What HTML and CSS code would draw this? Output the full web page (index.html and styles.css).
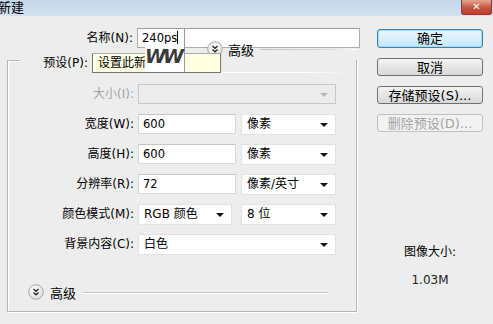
FILE: index.html
```html
<!DOCTYPE html>
<html lang="zh-CN">
<head>
    <meta charset="UTF-8">
    <title>新建</title>
    <link rel="stylesheet" href="styles.css">
</head>
<body>
<div class="dialog">
    <div class="titlebar">
        <span class="title">新建</span>
        <span class="close">✕</span>
    </div>

    <div class="main">
        <div class="left">
            <div class="name-row">
                <label>名称(N):</label>
                <div class="field name-field">240ps<span class="caret"></span></div>
            </div>

            <div class="group">
                <div class="preset-row">
                    <label>预设(P):</label>
                    <div class="preset-fade"></div>
                </div>

                <div class="row">
                    <label class="off">大小(I):</label>
                    <div class="select wide disabled"><span></span><i class="arrow"></i></div>
                </div>
                <div class="row">
                    <label>宽度(W):</label>
                    <div class="field">600</div>
                    <div class="select"><span>像素</span><i class="arrow"></i></div>
                </div>
                <div class="row">
                    <label>高度(H):</label>
                    <div class="field">600</div>
                    <div class="select"><span>像素</span><i class="arrow"></i></div>
                </div>
                <div class="row">
                    <label>分辨率(R):</label>
                    <div class="field">72</div>
                    <div class="select"><span>像素/英寸</span><i class="arrow"></i></div>
                </div>
                <div class="row">
                    <label>颜色模式(M):</label>
                    <div class="select short"><span>RGB 颜色</span><i class="arrow"></i></div>
                    <div class="select"><span>8 位</span><i class="arrow"></i></div>
                </div>
                <div class="row">
                    <label>背景内容(C):</label>
                    <div class="select wide"><span>白色</span><i class="arrow"></i></div>
                </div>

                <div class="advanced">
                    <svg class="toggle" width="16" height="16" viewBox="0 0 16 16">
                        <defs>
                            <radialGradient id="g1" cx="0.4" cy="0.35" r="0.7">
                                <stop offset="0" stop-color="#ffffff"/>
                                <stop offset="1" stop-color="#dcdcdc"/>
                            </radialGradient>
                        </defs>
                        <circle cx="8" cy="8" r="7.3" fill="url(#g1)" stroke="#a8a8a8"/>
                        <polyline points="5.5,5 8,7.3 10.5,5" fill="none" stroke="#222" stroke-width="1.3"/>
                        <polyline points="5.5,8.5 8,10.8 10.5,8.5" fill="none" stroke="#222" stroke-width="1.3"/>
                    </svg>
                    <span>高级</span>
                    <div class="rule"></div>
                </div>
            </div>
        </div>

        <div class="right">
            <button class="btn default">确定</button>
            <button class="btn">取消</button>
            <button class="btn">存储预设(S)...</button>
            <button class="btn" disabled>删除预设(D)...</button>

            <div class="size-info">
                <div>图像大小:</div>
                <div class="size-value">1.03M</div>
            </div>
        </div>
    </div>

    <!-- overlapping bits: top toggle, tooltip, watermark -->
    <div class="top-adv">
        <svg class="toggle" width="16" height="16" viewBox="0 0 16 16">
            <circle cx="8" cy="8" r="7.3" fill="url(#g1)" stroke="#a8a8a8"/>
            <polyline points="5.5,5 8,7.3 10.5,5" fill="none" stroke="#222" stroke-width="1.3"/>
            <polyline points="5.5,8.5 8,10.8 10.5,8.5" fill="none" stroke="#222" stroke-width="1.3"/>
        </svg>
        <span>高级</span>
        <div class="rule"></div>
    </div>
    <div class="tooltip">设置此新文档的</div>
    <div class="watermark">WW</div>
</div>
</body>
</html>
```

FILE: styles.css
```css
/* 新建 dialog */
body {
    margin: 0;
    font-family: 'DejaVu Sans', 'Noto Sans CJK SC', sans-serif;
    font-size: 12px;
    color: #000;
    background: #ededed;
}
.dialog {
    position: relative;
    width: 493px;
    height: 324px;
    overflow: hidden;
    background: #ededed;
}
.titlebar {
    height: 16px;
    border-bottom: 1px solid #e6eef6;
    background: linear-gradient(to bottom, #c4d8ec, #d3e2f1);
    display: flex;
    justify-content: space-between;
    align-items: flex-start;
}
.title {
    line-height: 15px;
    margin-left: -2px;
    font-size: 13px;
}
.close {
    width: 29px;
    height: 14px;
    margin-right: 1px;
    background: linear-gradient(to bottom, #e8a393, #c9533f 55%, #b8402d);
    border: 1px solid #8c3a2e;
    border-top: none;
    border-radius: 0 0 3px 3px;
    color: #fff;
    font-size: 10px;
    font-weight: bold;
    text-align: center;
    line-height: 13px;
}
.main {
    display: flex;
    padding-top: 11px;
}
.left {
    width: 370px;
}
.name-row {
    display: grid;
    grid-template-columns: 133px 223px;
    column-gap: 4px;
    height: 19px;
}
label {
    text-align: right;
    line-height: 20px;
    white-space: nowrap;
}
label.off {
    color: #a3a3a3;
}
.field {
    background: #fff;
    border: 1px solid #d9d9d9;
    border-top-color: #c4c4c4;
    padding-left: 4px;
    line-height: 18px;
    height: 18px;
    font-size: 11.5px;
}
.name-field {
    border-color: #abadb3;
    border-top-color: #9a9da4;
}
.caret {
    display: inline-block;
    width: 1px;
    height: 13px;
    background: #000;
    vertical-align: -2px;
}
.group {
    margin: 13px 0 0 7px;
    width: 348px;
    height: 250px;
    border: 1px solid #b5b5b5;
    box-shadow: inset 1px 1px 0 #fff, 1px 1px 0 #fff;
    display: flex;
    flex-direction: column;
    gap: 10px;
}
.preset-row {
    display: grid;
    grid-template-columns: 68px 262px;
    column-gap: 4px;
    height: 20px;
    margin: -8px 0 1px 12px;
    background: #ededed;
}
.preset-fade {
    margin-top: 19px;
    height: 1px;
    background: linear-gradient(to right, #ededed, #ffffff 55%, #ffffff 80%, #ededed);
}
.row {
    display: grid;
    grid-template-columns: 125px 98px 95px;
    column-gap: 5px;
    height: 20px;
    padding-right: 4px;
}
.row label {
    margin-right: -1px;
}
.row .field {
    height: 18px;
    line-height: 19px;
}
.select {
    position: relative;
    background: #fff;
    border: 1px solid #e2e2e2;
    line-height: 19px;
    padding-left: 5px;
}
.select.wide {
    grid-column: span 2;
}
.select.short {
    margin-right: 4px;
}
.select.disabled {
    background: #ececec;
    border-color: #c8c8c8;
}
.arrow {
    position: absolute;
    right: 7px;
    top: 8px;
    width: 0;
    height: 0;
    border-left: 4px solid transparent;
    border-right: 4px solid transparent;
    border-top: 4px solid #111;
}
.disabled .arrow {
    border-top-color: #b8b8b8;
}
.advanced {
    display: flex;
    align-items: center;
    margin: 19px 0 0 20px;
    height: 18px;
}
.advanced span {
    margin-left: 6px;
    font-size: 13px;
}
.advanced .rule {
    margin-left: 7px;
    width: 245px;
    height: 1px;
    background: #c3c3c3;
    box-shadow: 0 1px 0 #fff;
}
.right {
    width: 106px;
    margin-left: 7px;
    display: flex;
    flex-direction: column;
    gap: 10px;
}
.btn {
    font-family: inherit;
    font-size: 13px;
    height: 18px;
    padding: 0;
    border: 1px solid #707070;
    border-radius: 3px;
    background: linear-gradient(to bottom, #f4f4f4, #e6e6e6 50%, #d8d8d8);
    color: #000;
    line-height: 15px;
}
.btn.default {
    height: 19px;
    margin-top: 1px;
    border-color: #3c7fb1;
    background: linear-gradient(to bottom, #eaf6fd, #d9f0fc 50%, #bee6fd);
    box-shadow: inset 0 0 0 1px #a7d9f5;
}
.btn:disabled {
    border-color: #c0c0c0;
    background: #f2f2f2;
    color: #a3a3a3;
}
.size-info {
    margin-top: 103px;
    text-align: center;
    line-height: 14px;
}
.size-value {
    margin-top: 14px;
    color: #222;
}
.top-adv {
    position: absolute;
    left: 207px;
    top: 41px;
    display: flex;
    align-items: center;
    height: 16px;
}
.top-adv span {
    margin-left: 5px;
    font-size: 13px;
}
.top-adv .rule {
    margin-left: 6px;
    width: 97px;
    height: 1px;
    background: linear-gradient(to right, #c0c0c0, #d8d8d8 70%, #ffffff);
}
.tooltip {
    position: absolute;
    left: 92px;
    top: 53px;
    width: 122px;
    height: 18px;
    padding-left: 5px;
    background: #ffffe1;
    border: 1px solid #767676;
    border-top-color: #aaaaaa;
    line-height: 19px;
    overflow: hidden;
}
.watermark {
    position: absolute;
    left: 145px;
    top: 44px;
    width: 40px;
    height: 28px;
    padding-top: 1px;
    box-sizing: border-box;
    background: #fff;
    border-right: 1px solid #9a9a9a;
    color: #3a3a3a;
    font-family: 'DejaVu Sans', sans-serif;
    font-weight: bold;
    font-style: italic;
    font-size: 19px;
    letter-spacing: -3px;
    line-height: 22px;
}
.watermark::before {
    content: "";
    position: absolute;
    right: -1px;
    top: -16px;
    height: 16px;
    border-right: 1px solid #9a9a9a;
}
```
